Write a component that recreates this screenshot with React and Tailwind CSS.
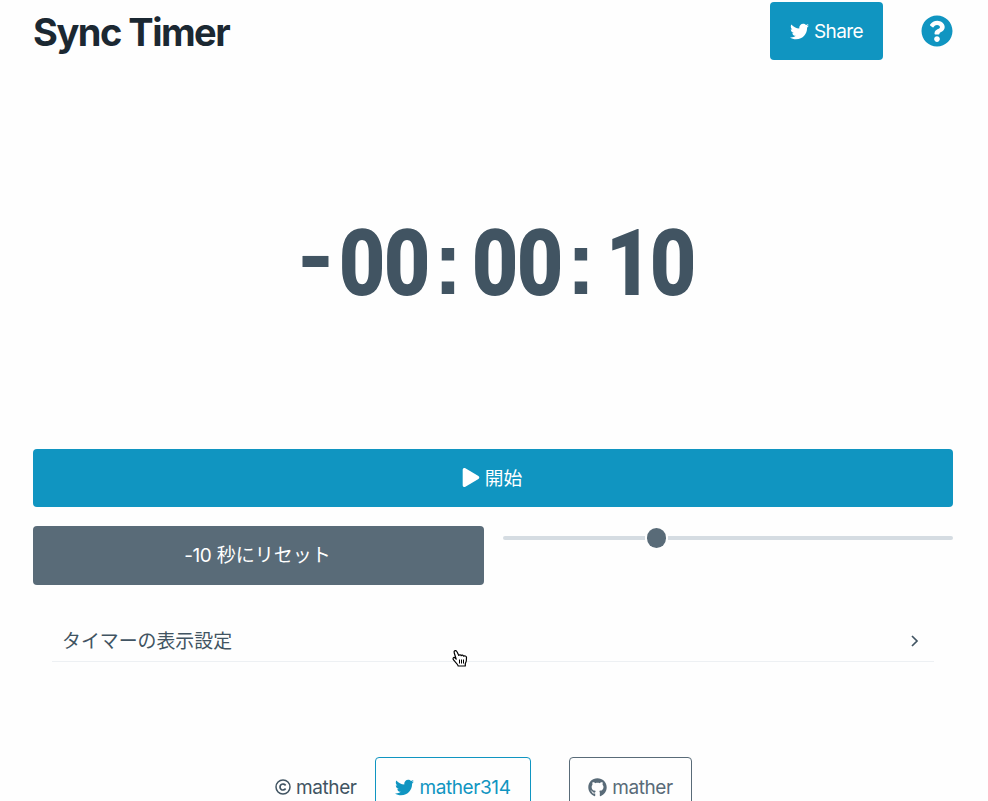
import { FaTwitter, FaQuestionCircle, FaPlay, FaGithub } from "react-icons/fa";

const glyphStyles = {
  digit: "inline-block origin-center scale-x-[0.86] font-['Roboto',sans-serif] text-[93.5px] font-black",
  minus: "inline-block origin-center -translate-x-[2px] -translate-y-[9px] scale-x-[1.1] font-['Liberation_Sans',sans-serif] text-[93px] font-bold",
  colon: "inline-block origin-center -translate-x-[3px] scale-x-[0.98] font-['Liberation_Sans',sans-serif] text-[90px] font-bold",
};

function glyphStyle(char) {
  if (char === "-") return glyphStyles.minus;
  if (char === ":") return glyphStyles.colon;
  return glyphStyles.digit;
}

function TimerDisplay({ value }) {
  return (
    <div className="flex h-[100px] justify-center pl-[3px] leading-[100px] text-[#415462]">
      {value.split("").map((char, i) => (
        <span key={i} className="flex w-[44.4px] shrink-0 justify-center">
          <span className={glyphStyle(char)}>{char}</span>
        </span>
      ))}
    </div>
  );
}

function CopyrightIcon() {
  return (
    <svg width="16" height="16" viewBox="0 0 16 16" fill="none" stroke="currentColor" strokeWidth="1.5" aria-hidden="true">
      <circle cx="8" cy="8" r="7" />
      <path d="M10.600 6.500A3 3 0 1 0 10.600 9.500" strokeWidth="1.700" />
    </svg>
  );
}

function HandCursor() {
  return (
    <svg className="absolute top-[649px] left-[451px]" width="17" height="18" viewBox="0 0 17 18" aria-hidden="true">
      <path
        d="M5.200 10.200 3.200 3.700C2.500 1.500 5.200.7 6 2.700L7.800 6.500c.4-1 2-1 2.400.2.600-.9 2-.6 2.300.5.900-.8 2.900-.2 3 1.200.2 3-.3 4.600-1.200 6.200V17H7.200c-.5-2-2.300-3.300-4.500-5.800C1 9 2.800 7.800 4.200 9Z"
        fill="white"
        stroke="black"
        strokeWidth="1.2"
        strokeLinejoin="round"
      />
      <path d="M8.500 10.500v4M10.500 10.500v4M12.500 10.500v4" stroke="black" />
    </svg>
  );
}

export default function App() {
  return (
    <div className="relative h-[801px] w-[988px] overflow-hidden bg-[#fefefe] px-[33px] font-['Inter','Noto_Sans_CJK_JP',sans-serif] text-[19px] leading-[28px] text-[#415462]">
      <header className="flex h-[60px] items-start pt-[2px]">
        <h1 className="pt-[2px] text-[38px] leading-[56px] font-bold tracking-[-1.5px] text-[#1b2832]">Sync Timer</h1>
        <button className="ml-auto flex h-[58px] w-[113px] items-center justify-center gap-[5px] rounded-[4px] bg-[#1095c1] tracking-[-0.6px] text-white">
          <FaTwitter className="size-[19px]" />
          <span className="pt-[2px]">Share</span>
        </button>
        <button className="mr-[2px] ml-[38px] flex h-[58px] items-center text-[#1095c1]" aria-label="Help">
          <FaQuestionCircle className="size-[32px]" />
        </button>
      </header>

      <main>
        <section className="flex h-[389px] flex-col pt-[153px]">
          <TimerDisplay value="-00:00:10" />
        </section>

        <button className="flex h-[58px] w-[920px] items-center justify-center gap-[5px] rounded-[4px] bg-[#1095c1] pr-[2px] text-white">
          <FaPlay className="mb-px h-[19px] w-[18px]" />
          <span className="pt-px text-[18.7px]">開始</span>
        </button>

        <div className="mt-[19px] flex gap-[19px]">
          <button className="h-[59px] w-[451px] rounded-[4px] bg-[#596b78] pr-[2px] text-white">
            <span className="tracking-[-0.4px]">-10</span> 秒にリセット
          </button>
          <div className="flex h-[24px] w-[450px] items-center">
            <span className="h-[4px] w-[142px] rounded-l-[2px] bg-[#d5dce2]" />
            <span className="mx-[2px] h-[20px] w-[19px] rounded-full bg-[#596b78]" />
            <span className="h-[4px] flex-1 rounded-r-[2px] bg-[#d5dce2]" />
          </div>
        </div>

        <div className="mt-[36px] ml-[19px] flex h-[41px] w-[882px] items-center justify-between border-b border-[#edf0f3] pr-[14px] pl-[10px]">
          <span className="pt-[2px] text-[18.9px]">タイマーの表示設定</span>
          <svg width="10" height="12" viewBox="0 0 10 12" fill="none" stroke="currentColor" strokeWidth="1.7" aria-hidden="true">
            <path d="m2 1 5 5-5 5" />
          </svg>
        </div>
      </main>

      <footer className="mt-[95px] ml-[242px] flex items-start tracking-[-0.4px]">
        <div className="flex h-[60px] w-[100px] items-center gap-[5px]">
          <CopyrightIcon />
          <span className="pt-px">mather</span>
        </div>
        <a className="flex h-[60px] w-[156px] items-center justify-center gap-[5px] rounded-[4px] border border-[#1095c1] text-[#1095c1]">
          <FaTwitter className="size-[19px]" />
          <span className="pt-px">mather314</span>
        </a>
        <a className="ml-[38px] flex h-[60px] w-[123px] items-center justify-center gap-[5px] rounded-[4px] border border-[#596b78] text-[#596b78]">
          <FaGithub className="size-[19px]" />
          <span className="pt-px">mather</span>
        </a>
      </footer>
      <HandCursor />
    </div>
  );
}
